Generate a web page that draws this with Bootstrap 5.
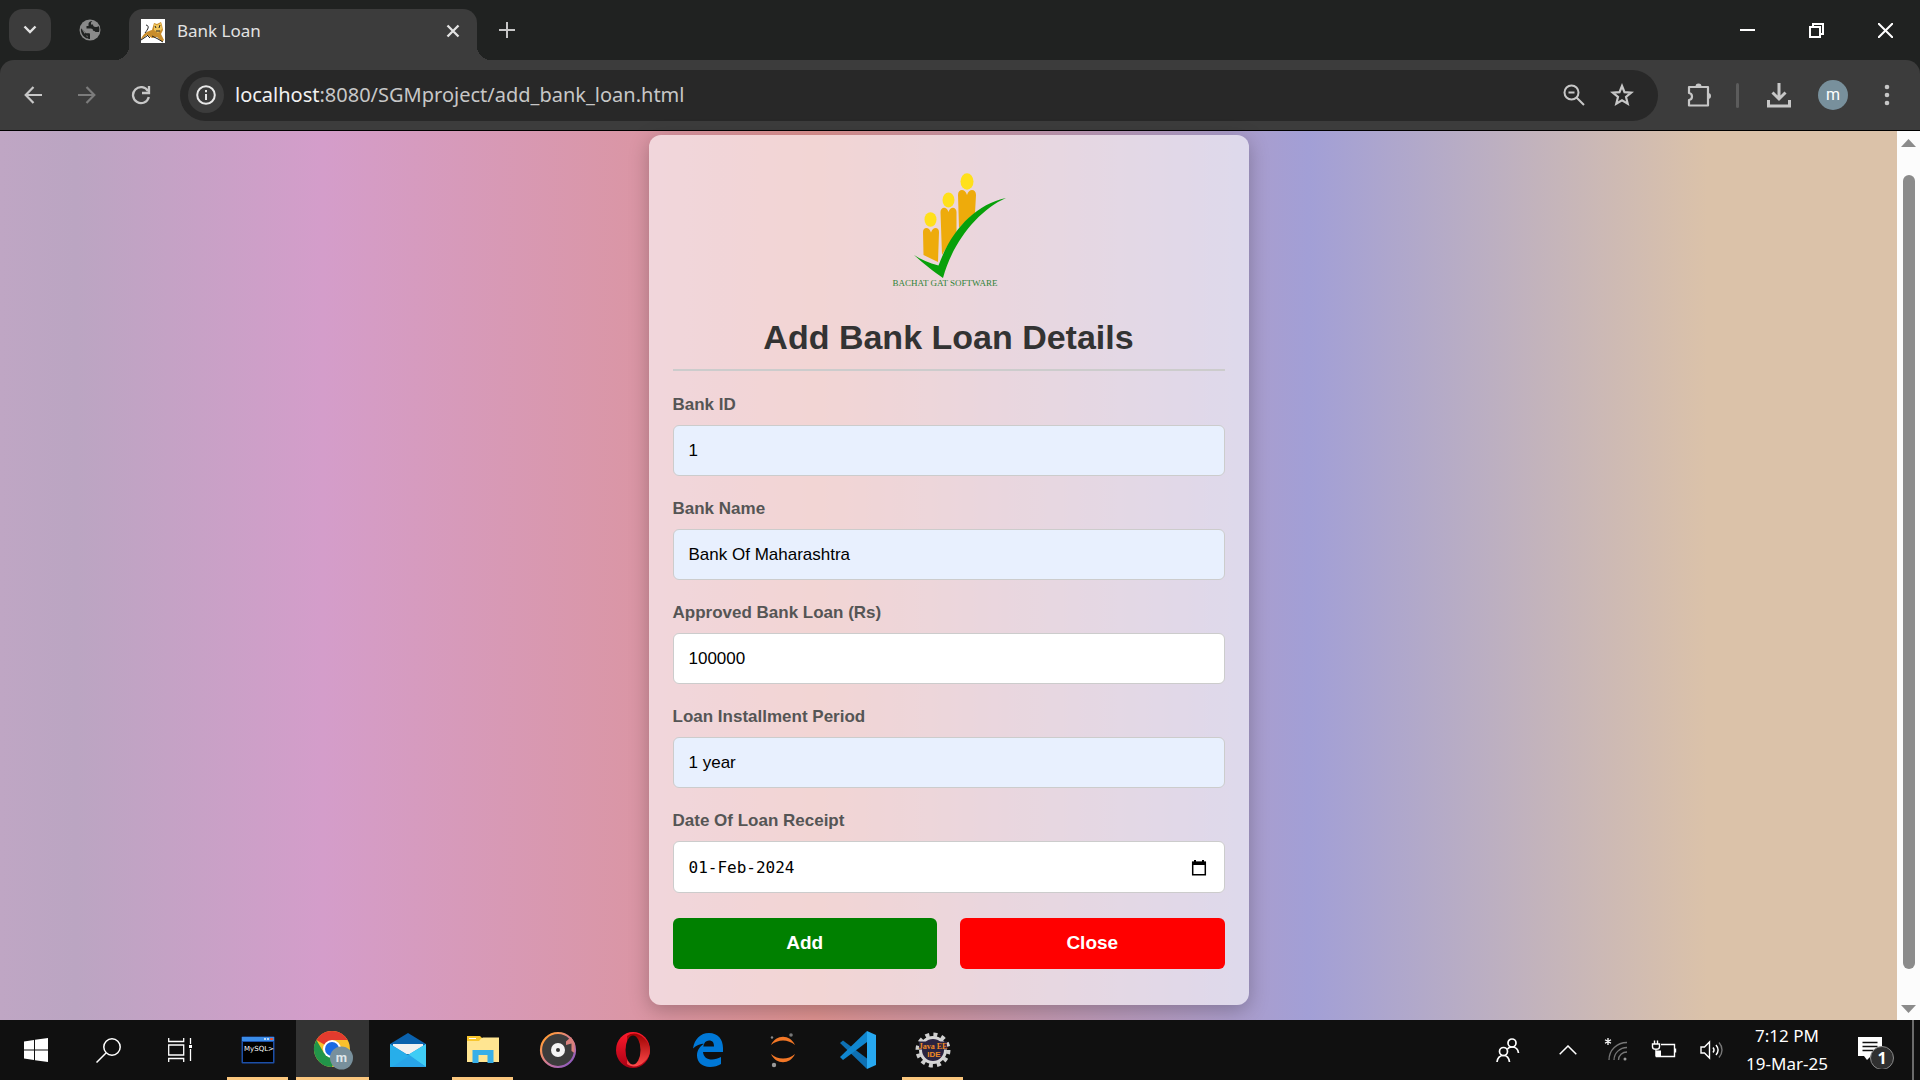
<!DOCTYPE html>
<html lang="en">
<head>
<meta charset="utf-8">
<meta name="viewport" content="width=device-width, initial-scale=1">
<title>Bank Loan</title>
<link href="https://cdn.jsdelivr.net/npm/bootstrap@5.3.0/dist/css/bootstrap.min.css" rel="stylesheet">
<style>
  :root { --ui: "Noto Sans", "Open Sans", sans-serif; --page: "Liberation Sans", Arial, sans-serif; }
  body { font-family: var(--ui); background: #101010; }
  button { font: inherit; color: inherit; background: none; border: 0; padding: 0; }
  svg { display: block; flex: none; }

  /* tab strip */
  .tabstrip { background: #202221; height: 60px; padding-left: 9px; color: #e3e3e3; }
  .tab-search { width: 42px; height: 42px; border-radius: 14px; background: #3c3c3c; }
  .tab-pinned { width: 78px; }
  .tab-active { width: 348px; height: 51px; background: #3c3c3c; border-radius: 14px 14px 0 0; padding: 0 14px 8px 12px; position: relative; font-size: 17px; }
  .tab-active::before, .tab-active::after { content: ""; position: absolute; bottom: 0; width: 14px; height: 14px; }
  .tab-active::before { right: 100%; background: radial-gradient(circle at 0 0, transparent 14px, #3c3c3c 14px); }
  .tab-active::after { left: 100%; background: radial-gradient(circle at 100% 0, transparent 14px, #3c3c3c 14px); }
  .tab-new { width: 60px; height: 60px; }
  .win-btn { width: 69px; height: 60px; }

  /* toolbar */
  .toolbar-wrap { background: #202221; }
  .toolbar { background: #3c3c3c; height: 71px; border-radius: 14px 14px 0 0; border-bottom: 1px solid #000; padding: 0 6px; color: #c7c7c7; }
  .tool { width: 54px; height: 54px; }
  .tool-sep { width: 22px; }
  .tool-sep i { width: 3px; height: 25px; background: #5c5c5c; border-radius: 2px; }
  .omnibox { height: 51px; border-radius: 26px; background: #282828; margin: 0 14px 0 12px; padding: 0 12px 0 8px; }
  .site-info { width: 36px; height: 36px; border-radius: 50%; background: #3c3c3c; color: #e8e8e8; }
  .address { background: none; border: 0; outline: 0; color: #c7c7c7; font-size: 20px; margin-left: 11px; min-width: 0; }
  .address b { font-weight: 400; color: #f1f1f1; }
  .omni-btn { width: 48px; height: 48px; }
  .avatar { width: 30px; height: 30px; border-radius: 50%; background: #78909c; color: #fff; font: 16px/30px Roboto, sans-serif; }

  /* page */
  .viewport-bg { background: linear-gradient(90deg, #bfa6c4 0, #bba5c2 4%, #d49dca 17%, #de9290 43%, #a29fd6 69%, #dbc2a9 90%, #dbc2a9 100%); padding: 4px 0 15px; font-family: var(--page); }
  .loan-form { width: 600px; max-width: 100%; padding: 24px 24px 36px; border-radius: 12px; background: rgba(255,255,255,.61); box-shadow: 0 5px 20px rgba(0,0,0,.25); }
  .loan-form svg { margin: 0 auto 8px; }
  .loan-form h1 { font-size: 34px; line-height: 40px; font-weight: 700; color: #333; padding-bottom: 12px; margin-bottom: 24px; border-bottom: 2px solid #ccc; }
  .field { margin-bottom: 23px; }
  .field label { font-size: 17px; line-height: 20px; font-weight: 700; color: #555; margin-bottom: 10px; display: block; }
  .field .form-control { height: 51px; border: 1px solid #ccc; border-radius: 6px; padding: 0 15px; font-size: 17px; color: #000; background: #fff; box-shadow: none; }
  .field .form-control.autofilled { background: #e8f0fe; }
  .field .form-control.date-box { font-family: "DejaVu Sans Mono", monospace; font-size: 16px; height: 52px; }
  .loan-form .date-open { position: absolute; right: 18px; top: 18px; }
  .loan-form .date-open svg { margin: 0; }
  .action { height: 51px; border: 0; border-radius: 6px; color: #fff; font-weight: 700; font-size: 19px; }
  .action-add { background: green; }
  .action-close { background: red; }
  .actions { gap: 23px; margin-top: 25px; }

  /* scrollbar */
  .scroll-rail { width: 23px; background: #fcfcfc; padding: 8px 0 7px; }
  .scroll-thumb { width: 12px; background: #8b8b8b; border-radius: 6px; margin: 28px 0 36px; }

  /* taskbar */
  .taskbar { height: 60px; background: #101010; color: #fff; }
  .task-sys { width: 72px; height: 60px; }
  .task-app { width: 75px; height: 60px; border-bottom: 3px solid transparent; padding-top: 3px; }
  .task-app.running { width: 61px; margin: 0 7px; border-color: #fbc77e; }
  .task-app.focused { width: 73px; margin: 0 1px; background: #333; border-color: #fbc77e; }
  .task-list { margin-left: 4px; }
  .tray { width: 48px; height: 60px; }
  .clock { width: 102px; font-size: 17px; line-height: 28px; }
  .notices { width: 74px; }
  .peek { width: 8px; border-left: 2px solid #6b6b6b; }
</style>
</head>
<body class="d-flex flex-column min-vh-100">

<header>
  <div class="tabstrip d-flex align-items-center">
    <button class="tab-search d-flex align-items-center justify-content-center" aria-label="Search tabs">
      <svg width="14" height="10" viewBox="0 0 14 10" fill="none" stroke="#e3e3e3" stroke-width="2.4"><path d="M1.5 1.5 7 7l5.500-5.500"/></svg>
    </button>
    <button class="tab-pinned d-flex justify-content-center" aria-label="Pinned tab">
      <svg width="22" height="22" viewBox="0 0 22 22"><circle cx="11" cy="11" r="10.500" fill="#8a8a8a"/><path fill="#202221" d="M12.500 2c-2 .5-3 1.500-3 3v2H7.500v2.500h4.200c1.600 0 2.300.8 2.300 2.300 1 0 2 .4 2.500 1.200h3.500c.6-2 .5-4-.3-6-.8.6-1.700 1-3 1-2 0-2.700-1-2.700-2.500h-2V4c0-.8.600-1.500 1.500-1.500zM2 9.500c-.5 4.500 2 8.500 6.500 10.200v-3c-1.500 0-2.500-1-2.500-2.500v-1.200L2.200 9.500zM2.500 10l4.500 4.300h3c.7 0 1 .5 1 1.200v4.500h-1.500"/></svg>
    </button>
    <div class="tab-active d-flex align-items-center align-self-end">
      <svg width="24" height="24" viewBox="0 0 24 24"><path fill="#fff" d="M0 0h24v24H0z"/><path fill="#c98d2b" d="M0 20c2-5 6-8 11-9l2-7 3 1 4-2 1 3 1 5-2 4 3 6-2 2-5-5-5 1-5-3-5 4z"/><path fill="#f0c55a" d="m13 5 3 1 4-2 1 6-4 4-4-3z"/><path d="M4 14C7 10 9 7 5 6M6 16l3 3M14 7l1 2M19 6l-1 3M15 12h4M0 21l6-4M11 17l6 3 5 3" stroke="#222" fill="none"/></svg>
      <span class="flex-grow-1 ps-2 ms-1">Bank Loan</span>
      <button aria-label="Close tab"><svg width="20" height="20" viewBox="0 0 20 20" stroke="#e3e3e3" stroke-width="2.300"><path d="m4.500 4.500 11 11m0-11-11 11"/></svg></button>
    </div>
    <button class="tab-new d-flex align-items-center justify-content-center" aria-label="New tab"><svg width="16" height="16" viewBox="0 0 16 16" stroke="#c7c7c7" stroke-width="2"><path d="M8 0v16M0 8h16"/></svg></button>
    <div class="ms-auto d-flex">
      <button class="win-btn d-flex align-items-center justify-content-center" aria-label="Minimize"><svg width="15" height="15" viewBox="0 0 15 15"><path fill="#fff" d="M0 6h15v2H0z"/></svg></button>
      <button class="win-btn d-flex align-items-center justify-content-center" aria-label="Restore"><svg width="15" height="15" viewBox="0 0 15 15" fill="none" stroke="#fff" stroke-width="2"><path d="M1 4h10v10H1zM4 4V1h10v10h-3"/></svg></button>
      <button class="win-btn d-flex align-items-center justify-content-center" aria-label="Close"><svg width="15" height="15" viewBox="0 0 15 15" stroke="#fff" stroke-width="2"><path d="m0 0 15 15M15 0 0 15"/></svg></button>
    </div>
  </div>
  <div class="toolbar-wrap">
    <div class="toolbar d-flex align-items-center">
      <button class="tool d-flex align-items-center justify-content-center" aria-label="Back"><svg width="18" height="18" viewBox="0 0 18 18" fill="none" stroke="currentColor" stroke-width="2.200"><path d="M18 9H2M9.500 1 1.700 9l7.800 8"/></svg></button>
      <button class="tool d-flex align-items-center justify-content-center" aria-label="Forward"><svg width="18" height="18" viewBox="0 0 18 18" fill="none" stroke="#7c7c7c" stroke-width="2.200"><path d="M0 9h16M8.500 1l7.800 8-7.800 8"/></svg></button>
      <button class="tool d-flex align-items-center justify-content-center" aria-label="Reload"><svg width="20" height="20" viewBox="0 0 20 20" fill="none" stroke="currentColor" stroke-width="2.300"><path d="M17.800 12A8 8 0 1 1 17 6.200"/><path d="M18 1v7h-7" /></svg></button>
      <div class="omnibox d-flex align-items-center flex-grow-1">
        <button class="site-info d-flex align-items-center justify-content-center" aria-label="Site information"><svg width="20" height="20" viewBox="0 0 20 20" fill="none" stroke="currentColor" stroke-width="2"><circle cx="10" cy="10" r="8.800"/><path d="M10 9v6M10 5v2.200"/></svg></button>
        <div class="address flex-grow-1" role="textbox" aria-label="Address"><b>localhost</b>:8080/SGMproject/add_bank_loan.html</div>
        <button class="omni-btn d-flex align-items-center justify-content-center" aria-label="Zoom"><svg width="22" height="22" viewBox="0 0 22 22" fill="none" stroke="currentColor" stroke-width="2"><circle cx="8.500" cy="8.500" r="7"/><path d="M5.500 8.500h6M13.500 13.500l7.500 7.500"/></svg></button>
        <button class="omni-btn d-flex align-items-center justify-content-center" aria-label="Bookmark"><svg width="24" height="24" viewBox="0 0 24 24" fill="none" stroke="currentColor" stroke-width="2.200"><path d="m12 3 2.500 6.200 6.700.5-5.200 4.200 1.700 6.700L12 17.200l-5.700 3.400L8 13.900 2.800 9.700l6.700-.5z"/></svg></button>
      </div>
      <button class="tool d-flex align-items-center justify-content-center" aria-label="Extensions"><svg width="26" height="26" viewBox="0 0 26 26"><path fill="none" stroke="currentColor" stroke-width="2.200" stroke-linejoin="round" d="M3 5h19v18.500H3V18c4-.5 4-6.500 0-7z"/><path fill="currentColor" d="M9.500 4.500a3 3 0 0 1 6 0zM22 11a3 3 0 0 1 0 6z"/></svg></button>
      <div class="tool-sep d-flex justify-content-center"><i></i></div>
      <button class="tool d-flex align-items-center justify-content-center ms-1" aria-label="Downloads"><svg width="24" height="26" viewBox="0 0 24 26" fill="none" stroke="currentColor" stroke-width="3"><path d="M12 1v15M5.500 10.500 12 17l6.500-6.500M1.500 18v6h21v-6"/></svg></button>
      <button class="tool d-flex align-items-center justify-content-center" aria-label="Profile"><span class="avatar">m</span></button>
      <button class="tool d-flex align-items-center justify-content-center" aria-label="Menu"><svg width="6" height="22" viewBox="0 0 6 22" fill="currentColor"><circle cx="3" cy="3" r="2.300"/><circle cx="3" cy="11" r="2.300"/><circle cx="3" cy="19" r="2.300"/></svg></button>
    </div>
  </div>
</header>

<div class="d-flex flex-grow-1">
  <main class="viewport-bg flex-grow-1 d-flex justify-content-center align-items-start">
    <form class="loan-form">
      <svg width="180" height="150" viewBox="0 0 180 150" role="img" aria-label="Bachat Gat Software">
        <g fill="#ffe01b"><ellipse cx="71.500" cy="60.500" rx="6" ry="7.300"/><ellipse cx="89.500" cy="41" rx="6" ry="7.500"/><ellipse cx="108" cy="22.500" rx="6.500" ry="8.300"/></g>
        <g fill="#eeab0b">
          <path d="M64 73c0-5 6-6 8 .500 2-6.500 8-5.500 8-.5l-1 30-14.500-7z"/>
          <path d="M81.500 53c0-5 6-6.500 8 0 2-6.500 8-5 8 0v22c-5 6-10 13-14.500 21z"/>
          <path d="M99 36c0-6 7-7 9 0 2-7 9-6 9 0l-1 18c-6 4-11 10-16 15z"/>
        </g>
        <path fill="#08a00a" d="M55 96c7 4.500 15 8 24.500 10.500C93 70 116 46 147 39 120 51 94 82 84 119 75 113 64 104 55 96z"/>
        <text x="86" y="127" text-anchor="middle" font-family="Liberation Serif, serif" font-size="9" fill="#2f8238">BACHAT GAT SOFTWARE</text>
      </svg>
      <h1 class="text-center">Add Bank Loan Details</h1>
      <div class="field"><label for="bankId">Bank ID</label><input class="form-control autofilled" id="bankId" type="text" value="1"></div>
      <div class="field"><label for="bankName">Bank Name</label><input class="form-control autofilled" id="bankName" type="text" value="Bank Of Maharashtra"></div>
      <div class="field"><label for="amount">Approved Bank Loan (Rs)</label><input class="form-control" id="amount" type="text" inputmode="numeric" value="100000"></div>
      <div class="field"><label for="period">Loan Installment Period</label><input class="form-control autofilled" id="period" type="text" value="1 year"></div>
      <div class="field"><label for="receipt">Date Of Loan Receipt</label>
        <div class="position-relative">
          <input class="form-control date-box" id="receipt" type="text" value="01-Feb-2024">
          <button class="date-open" type="button" aria-label="Open calendar"><svg width="16" height="18" viewBox="0 0 16 18"><path d="M1.700 3.500h12.600v12.300H1.700z" fill="none" stroke="#000" stroke-width="1.500"/><path d="M1 2.500h14V6H1zM3 1h2v2H3zM11 1h2v2h-2z"/></svg></button>
        </div>
      </div>
      <div class="actions d-flex">
        <button class="action action-add flex-fill w-50" type="submit">Add</button>
        <button class="action action-close flex-fill w-50" type="button">Close</button>
      </div>
    </form>
  </main>
  <div class="scroll-rail d-flex flex-column align-items-center" aria-hidden="true">
    <svg width="15" height="8" viewBox="0 0 15 8"><path fill="#8b8b8b" d="M7.500 0 15 8H0z"/></svg>
    <div class="scroll-thumb flex-grow-1"></div>
    <svg width="15" height="8" viewBox="0 0 15 8"><path fill="#8b8b8b" d="M7.500 8 15 0H0z"/></svg>
  </div>
</div>

<footer class="taskbar d-flex">
  <button class="task-sys d-flex align-items-center justify-content-center" aria-label="Start"><svg width="24" height="24" viewBox="0 0 24 24" fill="#fff"><path d="M0 3.400 10 2v9.500H0zM11 1.800 24 0v11.500H11zM0 12.500h10V22L0 20.600zM11 12.500h13V24l-13-1.800z"/></svg></button>
  <button class="task-sys d-flex align-items-center justify-content-center" aria-label="Search"><svg width="25" height="25" viewBox="0 0 25 25" fill="none" stroke="#fff" stroke-width="1.500"><circle cx="16" cy="9" r="8.200"/><path d="M10 15 .5 24.500"/></svg></button>
  <button class="task-sys d-flex align-items-center justify-content-center" aria-label="Task view"><svg width="24" height="24" viewBox="0 0 24 24" fill="none" stroke="#fff" stroke-width="1.300"><path d="M.7 0v3.500h15V0M.7 7h15v10h-15zM.7 24v-3.500h15V24M22.500 0v6M22.500 11v12"/><path fill="#fff" stroke="none" d="M21 7h3v3h-3z"/></svg></button>
  <div class="task-list d-flex">
  <button class="task-app running d-flex align-items-center justify-content-center" aria-label="MySQL">
    <svg width="34" height="28" viewBox="0 0 34 28"><rect x=".5" y=".5" width="33" height="27" rx="1" fill="#1c4fa8"/><path fill="#3a8ce8" d="M1 1h32v4H1z"/><path fill="#bcd8f8" d="M23 2h2v2h-2zM26 2h2v2h-2z"/><path fill="#e2563c" d="M29 2h3v2h-3z"/><path d="M2 6h30v20H2z"/><text x="3" y="14.500" font-family="DejaVu Sans, sans-serif" font-size="7" fill="#fff">MySQL&gt;</text></svg>
  </button>
  <button class="task-app focused d-flex align-items-center justify-content-center" aria-label="Chrome">
    <svg width="40" height="40" viewBox="0 0 40 40"><circle cx="19" cy="19" r="18" fill="#f9c12e"/><path fill="#e33b2e" d="M19 19 3.400 10A18 18 0 0 1 34.600 10H19z"/><path fill="#229549" d="M3.400 10a18 18 0 0 0 15.600 27l6-14H11z"/><circle cx="19" cy="19" r="9" fill="#fff"/><circle cx="19" cy="19" r="7" fill="#1b6ae4"/><circle cx="28.500" cy="28" r="11.500" fill="#78909c"/><text x="28.500" y="32" text-anchor="middle" font-family="Roboto, sans-serif" font-weight="700" font-size="13" fill="#dfe7ea">m</text></svg>
  </button>
  <button class="task-app d-flex align-items-center justify-content-center" aria-label="Mail">
    <svg width="36" height="34" viewBox="0 0 36 34"><path fill="#0a62ae" d="M0 11 18 0l18 11v8H0z"/><path fill="#f1f1f1" d="M3 11h30v10H3z"/><path fill="#1d8fd8" d="M0 11l18 11 18-11v23H0z"/><path fill="#3fcdf5" d="M18 22l18-11v23z"/><path fill="#28a4e8" d="M0 34h36L18 21z"/><path fill="#27aeea" d="m0 11 19 12L2 34H0z"/></svg>
  </button>
  <button class="task-app running d-flex align-items-center justify-content-center" aria-label="File Explorer">
    <svg width="32" height="28" viewBox="0 0 32 28"><path fill="#f8c62e" d="M0 0h13l3 3H0z"/><path fill="#ffe591" d="M0 4l13-1 3-1.500h16V26H0z"/><path fill="#f8c62e" d="M0 .5h12l2 2L12 5H0z"/><path fill="#fff" d="M2 2h7v1H2z"/><path fill="#37afe8" d="M5.500 14h21v13h-6v-8h-9v8h-6z"/></svg>
  </button>
  <button class="task-app d-flex align-items-center justify-content-center" aria-label="Music">
    <svg width="38" height="38" viewBox="0 0 38 38"><defs><linearGradient id="ring" x1="0" y1="0" x2="1" y2="1"><stop offset=".15" stop-color="#ff9a3e"/><stop offset=".55" stop-color="#cf7a9c"/><stop offset="1" stop-color="#7a50c8"/></linearGradient></defs><circle cx="19" cy="19" r="17" fill="#3c3c3c" stroke="url(#ring)" stroke-width="2.200"/><circle cx="19" cy="19" r="7" fill="#f4f4f4"/><circle cx="19" cy="19" r="2" fill="#333"/><path fill="#d9807c" d="M27 10.500 32 6l3.500 6v10l-3-2v-7.500L27 14z"/></svg>
  </button>
  <button class="task-app d-flex align-items-center justify-content-center" aria-label="Opera">
    <svg width="36" height="38" viewBox="0 0 36 38"><defs><linearGradient id="opl" x1="0" y1="0" x2="0" y2="1"><stop stop-color="#ff1b2d"/><stop offset="1" stop-color="#a70014"/></linearGradient><linearGradient id="opr" x1="0" y1="0" x2="0" y2="1"><stop stop-color="#9c0000"/><stop offset="1" stop-color="#ff4b4b"/></linearGradient></defs><ellipse cx="18" cy="19" rx="17" ry="18" fill="url(#opl)"/><path fill="url(#opr)" d="M12 5c5-4 12-3 17 2 8 8 8 17 0 24-5 5-12 6-17 2z"/><ellipse cx="18" cy="19" rx="7.500" ry="14.500" fill="#101010"/></svg>
  </button>
  <button class="task-app d-flex align-items-center justify-content-center" aria-label="Edge">
    <svg width="30" height="34" viewBox="0 0 30 34"><path fill="#0078d7" d="M0 15.500C1.500 6 7.500 0 16 0c9 0 14 6.500 14 15v4H10c.5 5 4 7.500 9 7.500 3 0 6-1 9-2.500v7c-3 2-7 3-11 3C9 34 4 29 4 22.500c0-5.500 3-9.500 7.500-12C7 11 3 12.500 0 15.500zM10.300 13.500H21c0-4-1.500-6-5-6-3 0-5.200 2-5.700 6z"/></svg>
  </button>
  <button class="task-app d-flex align-items-center justify-content-center" aria-label="Jupyter">
    <svg width="26" height="36" viewBox="0 0 26 36"><path fill="#f37726" d="M1 13C6 2 20 2 25 13 18 7 8 7 1 13zM1 22c5 11 19 11 24 0-7 6-17 6-24 0z"/><circle cx="21" cy="3" r="1.800" fill="#777"/><circle cx="2" cy="5.500" r="1.200" fill="#888"/><circle cx="4" cy="33" r="2.200" fill="#999"/></svg>
  </button>
  <button class="task-app d-flex align-items-center justify-content-center" aria-label="Visual Studio Code">
    <svg width="36" height="38" viewBox="0 0 36 38"><path fill="#0e70b3" d="m0 12 3-2.500 24 18V38z"/><path fill="#1086cf" d="M0 26l3 3L27 11V0z"/><path fill="#27a8f0" d="m27 0 9 4v30l-9 4z"/></svg>
  </button>
  <button class="task-app running d-flex align-items-center justify-content-center" aria-label="Java EE IDE">
    <svg width="36" height="36" viewBox="0 0 36 36"><circle cx="18" cy="18" r="15.500" fill="none" stroke="#cfcfcf" stroke-width="4" stroke-dasharray="4 4.110"/><circle cx="18" cy="18" r="12.500" fill="#2b2440" stroke="#d6d6d6" stroke-width="3"/><path fill="#2b2440" d="M4 9.500h28v8H4z"/><g font-weight="700" fill="#f08a24" text-anchor="middle"><text x="18" y="17" font-size="8" font-family="Liberation Serif, serif">Java EE</text><text x="19" y="25" font-size="8" font-family="Liberation Sans, sans-serif">IDE</text></g></svg>
  </button>
  </div>

  <button class="task-sys d-flex align-items-center justify-content-center ms-auto" aria-label="People"><svg width="24" height="24" viewBox="0 0 24 24" fill="none" stroke="#fff" stroke-width="1.700"><circle cx="16" cy="5" r="4"/><circle cx="7.500" cy="13.500" r="4"/><path d="M1 24c.5-4 3-6.500 6.500-6.500S13 20 13.500 24M11.500 11c1-1.500 2.500-2 4.500-2 3.500 0 6 2 6.500 6"/></svg></button>
  <button class="tray d-flex align-items-center justify-content-center" aria-label="Hidden icons"><svg width="18" height="10" viewBox="0 0 18 10" fill="none" stroke="#fff" stroke-width="1.500"><path d="m.7 9.300 8.300-8.300 8.300 8.300"/></svg></button>
  <button class="tray d-flex align-items-center justify-content-center" aria-label="Network"><svg width="24" height="24" viewBox="0 0 24 24" fill="none" stroke="#777" stroke-width="1.300"><path d="M5 22C5 12 13 4.500 23 4.500M10 22c0-7 6-12.500 13-12.500M14.500 22c0-4.500 4-8 8.500-8"/><circle cx="21" cy="21" r="1.500" fill="#999" stroke="none"/><path stroke="#fff" d="M4 0v7M1 1.700l6 3.500M7 1.700 1 5.200"/></svg></button>
  <button class="tray d-flex align-items-center justify-content-center" aria-label="Battery"><svg width="26" height="20" viewBox="0 0 26 20" fill="none" stroke="#fff" stroke-width="1.400"><path d="M10 4.500h13.500v12H5.500V11M24.500 8.500v4"/><path fill="#fff" stroke="none" d="M6 10.500h4V16H6z"/><path d="M3.500.5V4M6.500.5V4M1.500 4h7v3c0 3-7 3-7 0zM5 9.500v7"/></svg></button>
  <button class="tray d-flex align-items-center justify-content-center" aria-label="Volume"><svg width="24" height="20" viewBox="0 0 24 20" fill="none" stroke="#fff" stroke-width="1.400"><path d="M1 7h3.500L9.500 2v16l-5-5H1z"/><path d="M13 7.500c1.300 1.500 1.300 3.500 0 5M16 5c2.500 3 2.500 7 0 10"/><path stroke="#777" d="M19 2.500c4 4.500 4 10.500 0 15"/></svg></button>
  <div class="clock text-center d-flex flex-column justify-content-center text-nowrap"><span>7:12 PM</span><span>19-Mar-25</span></div>
  <button class="notices d-flex align-items-center justify-content-center" aria-label="1 notification"><svg width="40" height="38" viewBox="0 0 40 38"><path fill="#fff" d="M3 6h24v19H16l-4 4-3-4H3z"/><path stroke="#101010" stroke-width="1.300" d="M7.500 11.500h15M7.500 15.500h15M7.500 19.500h11"/><circle cx="27" cy="27" r="11.500" fill="#303030" stroke="#8a8a8a"/><text x="27" y="33" text-anchor="middle" font-family="Noto Sans, sans-serif" font-size="16" font-weight="700" fill="#fff">1</text></svg></button>
  <div class="peek"></div>
</footer>

<script src="https://cdn.jsdelivr.net/npm/bootstrap@5.3.0/dist/js/bootstrap.bundle.min.js"></script>
</body>
</html>
